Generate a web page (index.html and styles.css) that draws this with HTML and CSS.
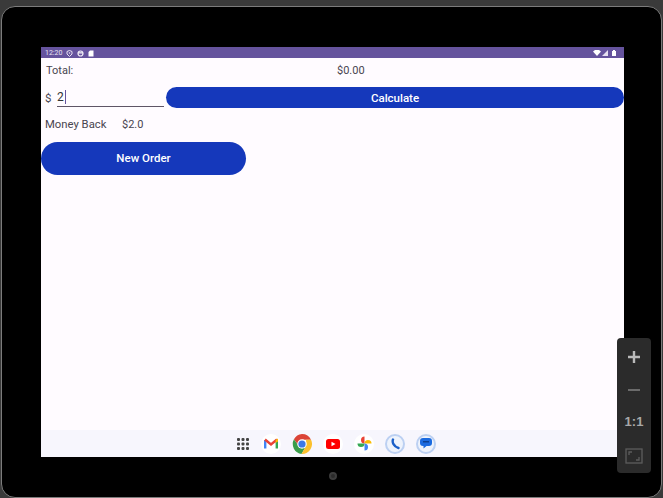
FILE: index.html
```html
<!DOCTYPE html>
<html lang="en">
<head>
<meta charset="utf-8">
<title>Order</title>
<link rel="stylesheet" href="styles.css">
</head>
<body>
<div class="device">
  <div class="screen">
    <div class="statusbar">
      <div class="status-left">
        <span class="clock">12:20</span>
        <svg width="7" height="7" viewBox="0 0 7 7"><path d="M3.500.5 6 1.500V4L3.500 6.500 1 4V1.500Z" fill="none" stroke="#e8e2f0" stroke-width="1"/><circle cx="3.500" cy="3" r=".8" fill="#e8e2f0"/></svg>
        <svg width="7" height="7" viewBox="0 0 7 7"><circle cx="3.500" cy="3.500" r="2.500" fill="none" stroke="#f2eef6" stroke-width="1.200"/><path d="M1 2.200h5V3.500H1Z" fill="#f2eef6"/></svg>
        <svg width="6" height="7" viewBox="0 0 6 7"><path d="M2 .5H5.500V6.500H.5V2Z" fill="#fff"/></svg>
      </div>
      <div class="status-right">
        <svg width="8" height="6" viewBox="0 0 8 6"><path d="M0 1.500 2 0H6L8 1.500 4 6Z" fill="#fff"/></svg>
        <svg width="6" height="6" viewBox="0 0 6 6"><path d="M6 0V6H0Z" fill="#e6dff0"/></svg>
        <svg class="batt" width="4" height="6" viewBox="0 0 4 6"><path d="M1 0H3V1H4V6H0V1H1Z" fill="#fff"/></svg>
      </div>
    </div>
    <main class="app">
      <div class="row total-row">
        <span class="total-label">Total:</span>
        <span class="total-value">$0.00</span>
      </div>
      <div class="row pay-row">
        <span class="dollar">$</span>
        <div class="field"><span class="field-text">2</span><span class="caret"></span></div>
        <button class="calc">Calculate</button>
      </div>
      <div class="row back-row">
        <span class="back-label">Money Back</span>
        <span class="back-value">$2.0</span>
      </div>
      <button class="new-order">New Order</button>
    </main>
    <nav class="dock">
      <svg class="apps" width="14" height="14" viewBox="0 0 14 14" fill="#444">
        <rect x="1" y="1" width="3" height="3" rx="1"/><rect x="5.500" y="1" width="3" height="3" rx="1"/><rect x="10" y="1" width="3" height="3" rx="1"/>
        <rect x="1" y="5.500" width="3" height="3" rx="1"/><rect x="5.500" y="5.500" width="3" height="3" rx="1"/><rect x="10" y="5.500" width="3" height="3" rx="1"/>
        <rect x="1" y="10" width="3" height="3" rx="1"/><rect x="5.500" y="10" width="3" height="3" rx="1"/><rect x="10" y="10" width="3" height="3" rx="1"/>
      </svg>
      <span class="app-icon">
        <svg width="14" height="11" viewBox="0 0 14 11"><path d="M1.200 10.500V2" stroke="#4285f4" stroke-width="2.400" fill="none"/><path d="M12.800 10.500V2" stroke="#34a853" stroke-width="2.400" fill="none"/><path d="M1 1.500 7 6.500 13 1.500" stroke="#ea4335" stroke-width="2.400" fill="none"/><path d="M11.600 2 14 .5V3.500L11.600 5Z" fill="#fbbc04"/></svg>
      </span>
      <span class="app-icon">
        <svg width="20" height="20" viewBox="0 0 21 21"><path d="M10.500 0A10.500 10.500 0 0 1 20 6H10.500L6 11 2 5.600A10.500 10.500 0 0 1 10.500 0Z" fill="#db4437"/><path d="M2 5.600A10.500 10.500 0 0 0 10 21L14.800 12.500 6 11Z" fill="#3a9d4a"/><path d="M20 6A10.500 10.500 0 0 1 10 21L14.800 12.500V6Z" fill="#fbc02d"/><circle cx="10.500" cy="10.500" r="5" fill="#fff"/><circle cx="10.500" cy="10.500" r="3.800" fill="#3b78e7"/></svg>
      </span>
      <span class="app-icon">
        <svg width="14" height="10" viewBox="0 0 14 10"><rect width="14" height="10" rx="2.500" fill="#f00"/><path d="M5.500 2.800 9.500 5 5.500 7.200Z" fill="#fff"/></svg>
      </span>
      <span class="app-icon">
        <svg width="15" height="15" viewBox="0 0 15 15"><path d="M7.500 7.500V.5A3.500 3.500 0 0 0 7.500 7.500Z" fill="#ea4335"/><path d="M7.500 7.500H14.500A3.500 3.500 0 0 0 7.500 7.500Z" fill="#fbbc04"/><path d="M7.500 7.500V14.500A3.500 3.500 0 0 0 7.500 7.500Z" fill="#4285f4"/><path d="M7.500 7.500H.5A3.500 3.500 0 0 0 7.500 7.500Z" fill="#34a853"/></svg>
      </span>
      <span class="app-icon ring">
        <svg width="11" height="12" viewBox="0 0 11 12"><path d="M3 1.500C2 4 3.500 8.500 8.500 10" stroke="#1a5fc8" stroke-width="2.400" fill="none" stroke-linecap="round"/></svg>
      </span>
      <span class="app-icon ring">
        <svg width="12" height="11" viewBox="0 0 12 11"><path d="M3 0H9A3 3 0 0 1 12 3V5A3 3 0 0 1 9 8H6.500L3.500 10.500V8H3A3 3 0 0 1 0 5V3A3 3 0 0 1 3 0Z" fill="#1a6ae0"/><rect x="3" y="3" width="6" height="1.500" fill="#0b3f92"/></svg>
      </span>
    </nav>
  </div>
  <div class="camera"></div>
</div>
<aside class="zoom-panel">
  <svg width="14" height="14" viewBox="0 0 14 14"><path d="M7 1V13M1 7H13" stroke="#b9b9b9" stroke-width="2.400"/></svg>
  <svg width="14" height="14" viewBox="0 0 14 14"><path d="M1 7H13" stroke="#6b6b6b" stroke-width="2"/></svg>
  <span class="one-one">1:1</span>
  <svg width="18" height="16" viewBox="0 0 18 16"><rect x="1" y="1" width="16" height="14" fill="none" stroke="#5c5c5c" stroke-width="1.300"/><path d="M4 7V4H7M14 9V12H11" fill="none" stroke="#5c5c5c" stroke-width="1.300"/></svg>
</aside>
</body>
</html>
```
FILE: styles.css
```css
* { box-sizing: border-box; }
html, body { margin: 0; padding: 0; }
body {
  width: 663px;
  height: 498px;
  overflow: hidden;
  background: #3a3a3a;
  position: relative;
  font-family: Roboto, "Liberation Sans", sans-serif;
}
.device {
  width: 661px;
  height: 492px;
  margin: 6px 0 0 1px;
  padding: 40px 37px 0 39px;
  background: #000;
  border: 1px solid #7c7c7c;
  border-radius: 14px;
}
.screen {
  width: 583px;
  height: 410px;
  background: #fffbff;
  display: flex;
  flex-direction: column;
}
.statusbar {
  height: 11px;
  background: #65539d;
  display: flex;
  justify-content: space-between;
  align-items: center;
  padding: 1px 8px 0 4px;
  flex: none;
}
.status-left, .status-right { display: flex; align-items: center; }
.status-left { gap: 4px; }
.status-right { gap: 1px; }
.batt { margin-left: 3px; }
.clock { font-size: 7px; color: #e9e3f2; line-height: 10px; }
.app {
  flex: 1;
  display: flex;
  flex-direction: column;
  color: #49454f;
  font-size: 11px;
}
.row { display: flex; align-items: center; }
.total-row { height: 24px; padding-left: 5px; }
.total-label { width: 291px; }
.pay-row { height: 30px; padding-left: 4px; align-items: flex-start; }
.dollar { width: 12px; font-size: 11.500px; line-height: 14px; margin-top: 9px; }
.field {
  width: 107px;
  height: 20px;
  padding-top: 3px;
  margin-top: 5px;
  border-bottom: 1px solid #5f5566;
  display: flex;
  align-items: flex-start;
  color: #333;
  font-size: 12px;
}
.field-text { line-height: 14px; }
.caret { width: 1px; height: 14px; background: #65539d; margin-left: 1px; }
.calc {
  flex: 1;
  margin: 5px 0 0 2px;
  height: 21px;
  border: 0;
  padding: 0;
  border-radius: 11px;
  background: #1538bb;
  color: #fff;
  font: 500 11.500px Roboto, "Liberation Sans", sans-serif;
}
.back-row { height: 24px; padding-left: 4px; }
.back-label { width: 77px; font-size: 11.300px; }
.new-order {
  width: 205px;
  height: 33px;
  margin-top: 6px;
  border: 0;
  padding: 0 0 2px;
  border-radius: 17px;
  background: #1538bb;
  color: #fff;
  font: 500 11.500px Roboto, "Liberation Sans", sans-serif;
}
.dock {
  height: 27px;
  flex: none;
  background: #f7f6fd;
  display: flex;
  justify-content: center;
  align-items: center;
  gap: 11px;
  padding-left: 7px;
}
.app-icon {
  width: 20px;
  height: 20px;
  border-radius: 50%;
  background: #fff;
  display: flex;
  align-items: center;
  justify-content: center;
  flex: none;
}
.ring { border: 2px solid #bcd0f2; background: #eef3fc; }
.camera {
  width: 8px;
  height: 8px;
  margin: 15px auto 0;
  border-radius: 50%;
  background: #2a2a2a;
  border: 2px solid #3c3c3c;
}
.zoom-panel {
  position: absolute;
  left: 617px;
  top: 338px;
  width: 34px;
  height: 135px;
  background: #2b2b2b;
  border-radius: 4px;
  display: flex;
  flex-direction: column;
  align-items: center;
  justify-content: space-between;
  padding: 12px 0 9px;
}
.one-one { font: 700 13px "Liberation Sans", sans-serif; color: #a8a8a8; line-height: 14px; }
```
